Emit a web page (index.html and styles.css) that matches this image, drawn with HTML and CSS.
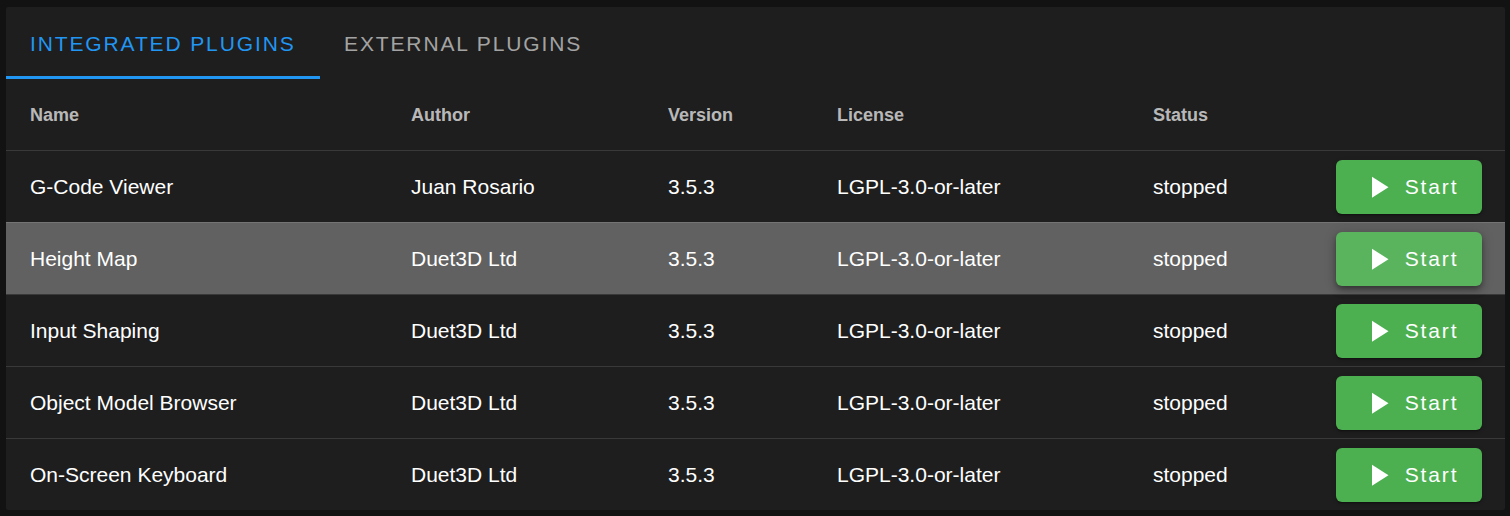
FILE: index.html
```html
<!DOCTYPE html>
<html lang="en">
<head>
  <meta charset="UTF-8" />
  <title>Plugins</title>
  <link rel="stylesheet" href="styles.css">
</head>
<body>

  <div class="card">
    <div class="tabs">
      <div class="tab active">Integrated Plugins</div>
      <div class="tab">External Plugins</div>
    </div>

    <table class="plugins">
      <colgroup>
        <col class="c-name">
        <col class="c-author">
        <col class="c-version">
        <col class="c-license">
        <col class="c-status">
        <col class="c-action">
      </colgroup>
      <thead>
        <tr>
          <th>Name</th>
          <th>Author</th>
          <th>Version</th>
          <th>License</th>
          <th>Status</th>
          <th></th>
        </tr>
      </thead>
      <tbody>
        <tr>
          <td>G-Code Viewer</td>
          <td>Juan Rosario</td>
          <td>3.5.3</td>
          <td>LGPL-3.0-or-later</td>
          <td>stopped</td>
          <td><button class="btn-start"><svg viewBox="0 0 24 24"><path d="M8,5.14V19.14L19,12.14L8,5.14Z"/></svg>Start</button></td>
        </tr>
        <tr class="hover">
          <td>Height Map</td>
          <td>Duet3D Ltd</td>
          <td>3.5.3</td>
          <td>LGPL-3.0-or-later</td>
          <td>stopped</td>
          <td><button class="btn-start"><svg viewBox="0 0 24 24"><path d="M8,5.14V19.14L19,12.14L8,5.14Z"/></svg>Start</button></td>
        </tr>
        <tr>
          <td>Input Shaping</td>
          <td>Duet3D Ltd</td>
          <td>3.5.3</td>
          <td>LGPL-3.0-or-later</td>
          <td>stopped</td>
          <td><button class="btn-start"><svg viewBox="0 0 24 24"><path d="M8,5.14V19.14L19,12.14L8,5.14Z"/></svg>Start</button></td>
        </tr>
        <tr>
          <td>Object Model Browser</td>
          <td>Duet3D Ltd</td>
          <td>3.5.3</td>
          <td>LGPL-3.0-or-later</td>
          <td>stopped</td>
          <td><button class="btn-start"><svg viewBox="0 0 24 24"><path d="M8,5.14V19.14L19,12.14L8,5.14Z"/></svg>Start</button></td>
        </tr>
        <tr>
          <td>On-Screen Keyboard</td>
          <td>Duet3D Ltd</td>
          <td>3.5.3</td>
          <td>LGPL-3.0-or-later</td>
          <td>stopped</td>
          <td><button class="btn-start"><svg viewBox="0 0 24 24"><path d="M8,5.14V19.14L19,12.14L8,5.14Z"/></svg>Start</button></td>
        </tr>
      </tbody>
    </table>
  </div>

</body>
</html>
```

FILE: styles.css
```css
html, body {
  margin: 0;
  background-color: #121212;
}

body {
  padding: 7px 5px 5px 6px;
  font-family: 'Liberation Sans', Arial, sans-serif;
  color: #ffffff;
}

.card {
  background-color: #1e1e1e;
  border-radius: 2px;
}

.tabs {
  display: flex;
  height: 72px;
}

.tab {
  display: flex;
  align-items: center;
  padding: 2px 24px 0;
  font-size: 21px;
  letter-spacing: 1.875px;
  text-transform: uppercase;
  color: rgba(255, 255, 255, 0.6);
}

.tab.active {
  color: #2196f3;
  box-shadow: inset 0 -3px 0 #2196f3;
  min-width: 266px;
}

.plugins {
  width: 100%;
  border-collapse: collapse;
  table-layout: fixed;
}

.c-name { width: 381px; }
.c-author { width: 257px; }
.c-version { width: 169px; }
.c-license { width: 316px; }
.c-status { width: 181px; }
.c-action { width: 195px; }

.plugins th,
.plugins td {
  padding: 2px 24px 0;
  text-align: left;
  box-sizing: border-box;
  white-space: nowrap;
}

.plugins th {
  height: 71px;
  font-size: 18px;
  font-weight: bold;
  color: rgba(255, 255, 255, 0.7);
  border-bottom: 1px solid rgba(255, 255, 255, 0.12);
}

.plugins td {
  height: 72px;
  font-size: 21px;
  border-bottom: 1px solid rgba(255, 255, 255, 0.12);
}

.plugins tbody tr:last-child td {
  border-bottom: none;
}

.plugins tr.hover td {
  background-color: #616161;
}

.btn-start {
  display: flex;
  align-items: center;
  justify-content: center;
  width: 146px;
  height: 54px;
  margin-left: 2px;
  padding: 0;
  border: none;
  border-radius: 6px;
  background-color: #4caf50;
  color: #ffffff;
  font-family: inherit;
  font-size: 21px;
  letter-spacing: 1.875px;
  cursor: pointer;
  box-shadow: 0 3px 1px -2px rgba(0, 0, 0, 0.2), 0 2px 2px 0 rgba(0, 0, 0, 0.14), 0 1px 5px 0 rgba(0, 0, 0, 0.12);
}

.btn-start svg {
  width: 36px;
  height: 36px;
  margin-right: 9px;
  fill: #ffffff;
}

.hover .btn-start {
  background-color: #5ab45e;
  box-shadow: 0 3px 5px -1px rgba(0, 0, 0, 0.3), 0 5px 8px 0 rgba(0, 0, 0, 0.2), 0 1px 14px 0 rgba(0, 0, 0, 0.14);
}
```
